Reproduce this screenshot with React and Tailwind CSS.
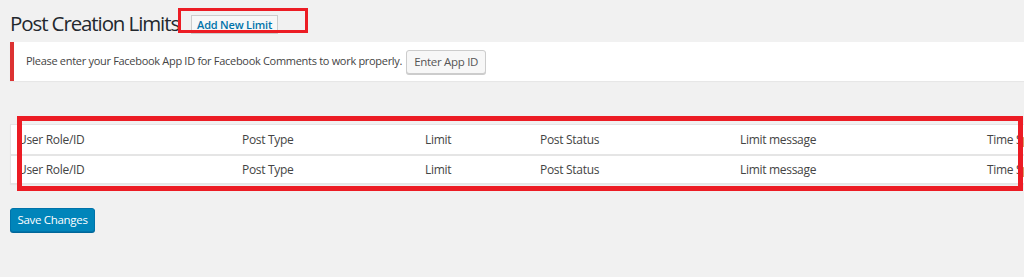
import React from "react";

const columns = ["User Role/ID", "Post Type", "Limit", "Post Status", "Limit message", "Time Span"];
const rows = [columns, columns];

function App() {
  return (
    <div
      className="min-h-[277px] w-[1024px] overflow-hidden bg-[#f1f1f1] text-[#444]"
      style={{ fontFamily: '"Open Sans", "Noto Sans", sans-serif' }}
    >
      <div className="pl-[10px] pt-[9px]">
        {/* title */}
        <div className="relative flex h-[29px] items-center">
          <h1 className="text-[20.5px] font-normal leading-[29px] tracking-[-1.1px] text-[#23282d]">
            Post Creation Limits
          </h1>
          <button className="ml-[12px] mt-[2px] h-[19px] w-[87px] border border-[#ccc] bg-[#f7f7f7] text-[11px] font-semibold leading-[17px] tracking-[-0.2px] text-[#0073aa]">
            Add New Limit
          </button>
          <div className="absolute left-[168px] top-[-1px] h-[25px] w-[130px] border-[3px] border-[#ec1c24]" />
        </div>

        {/* notice */}
        <div className="mt-[4px] flex h-[39px] items-center border-l-4 border-[#dc3232] bg-white pl-[12px] shadow-[0_1px_1px_rgba(0,0,0,0.04)]">
          <p className="text-[11px] tracking-[-0.3px] text-[#444]">
            Please enter your Facebook App ID for Facebook Comments to work properly.
          </p>
          <button className="ml-[4px] h-[24px] w-[80px] rounded-[3px] border border-[#ccc] bg-[#f7f7f7] text-[11.5px] tracking-[-0.3px] text-[#555] shadow-[0_1px_0_#ccc]">
            Enter App ID
          </button>
        </div>

        {/* table */}
        <div className="relative mt-[43px]">
          <div className="w-[1100px] border border-[#e5e5e5] bg-white shadow-[0_1px_1px_rgba(0,0,0,0.04)]">
            {rows.map((row, i) => (
              <div
                key={i}
                className={
                  "grid h-[29px] grid-cols-[224px_183px_115px_200px_247px_131px] items-center text-[12px] tracking-[-0.3px] text-[#444] " +
                  (i > 0 ? "border-t-2 border-[#e5e5e5]" : "")
                }
              >
                {row.map((c) => (
                  <div key={c} className="whitespace-nowrap pl-[7px]">
                    {c}
                  </div>
                ))}
              </div>
            ))}
          </div>
          <div className="absolute left-[7px] top-[-8px] h-[75px] w-[1006px] border-[5px] border-[#ec1c24]" />
        </div>

        {/* save */}
        <button className="mt-[24px] h-[24px] w-[85px] rounded-[3px] border border-[#0073aa] bg-[#0085ba] text-[11.5px] tracking-[-0.3px] text-white shadow-[0_1px_0_#006799]">
          Save Changes
        </button>
      </div>
    </div>
  );
}

export default App;
